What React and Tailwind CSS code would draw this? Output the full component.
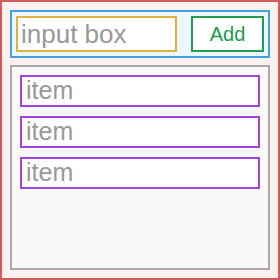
export default function App() {
  const items = ['item', 'item', 'item'];

  return (
    <div
      className="w-[280px] h-[280px] border-2 border-[#d25c5c] bg-[#fff0f0] p-2 flex flex-col gap-[7px]"
      style={{ fontFamily: '"Liberation Sans", Arial, sans-serif' }}
    >
      {/* Input row */}
      <div className="border-2 border-[#41a0e0] bg-[#eef6fd] p-1 flex items-center gap-[14px]">
        <input
          className="w-[161px] h-[36px] border-2 border-[#e0b43c] bg-white px-[3px] text-[26px] text-[#999] placeholder:text-[#999] outline-none"
          placeholder="input box"
        />
        <button className="flex-1 h-[36px] border-2 border-[#1ea050] bg-white text-[20px] text-[#1a9a4e]">
          Add
        </button>
      </div>

      {/* List */}
      <div className="flex-1 border-2 border-[#aaaaaa] bg-[#f9f9f9] p-2 flex flex-col gap-[9px]">
        {items.map((item, i) => (
          <div
            key={i}
            className="h-[32px] border-2 border-[#a444e0] bg-white px-1 flex items-center text-[25px] text-[#999]"
          >
            {item}
          </div>
        ))}
      </div>
    </div>
  );
}
